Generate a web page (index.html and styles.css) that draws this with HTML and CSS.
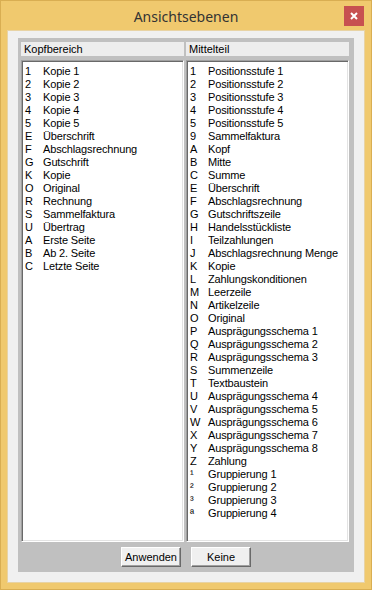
FILE: index.html
```html
<!DOCTYPE html>
<html>
<head>
	<title>Ansichtsebenen</title>
	<link rel="stylesheet" href="styles.css">
</head>
<body>
<div class="window">
	<div class="titlebar">
		<div class="title">Ansichtsebenen</div>
		<div class="close">
			<svg width="8" height="8" viewBox="0 0 8 8"><path d="M1 1L7 7M7 1L1 7" stroke="#fff" stroke-width="2"/></svg>
		</div>
	</div>
	<div class="client">
		<div class="panel">
			<div class="columns">
				<div class="column">
					<div class="header">Kopfbereich</div>
					<div class="list">
						<div class="item"><span>1</span><span>Kopie 1</span></div>
						<div class="item"><span>2</span><span>Kopie 2</span></div>
						<div class="item"><span>3</span><span>Kopie 3</span></div>
						<div class="item"><span>4</span><span>Kopie 4</span></div>
						<div class="item"><span>5</span><span>Kopie 5</span></div>
						<div class="item"><span>E</span><span>Überschrift</span></div>
						<div class="item"><span>F</span><span>Abschlagsrechnung</span></div>
						<div class="item"><span>G</span><span>Gutschrift</span></div>
						<div class="item"><span>K</span><span>Kopie</span></div>
						<div class="item"><span>O</span><span>Original</span></div>
						<div class="item"><span>R</span><span>Rechnung</span></div>
						<div class="item"><span>S</span><span>Sammelfaktura</span></div>
						<div class="item"><span>U</span><span>Übertrag</span></div>
						<div class="item"><span>A</span><span>Erste Seite</span></div>
						<div class="item"><span>B</span><span>Ab 2. Seite</span></div>
						<div class="item"><span>C</span><span>Letzte Seite</span></div>
					</div>
				</div>
				<div class="column">
					<div class="header">Mittelteil</div>
					<div class="list">
						<div class="item"><span>1</span><span>Positionsstufe 1</span></div>
						<div class="item"><span>2</span><span>Positionsstufe 2</span></div>
						<div class="item"><span>3</span><span>Positionsstufe 3</span></div>
						<div class="item"><span>4</span><span>Positionsstufe 4</span></div>
						<div class="item"><span>5</span><span>Positionsstufe 5</span></div>
						<div class="item"><span>9</span><span>Sammelfaktura</span></div>
						<div class="item"><span>A</span><span>Kopf</span></div>
						<div class="item"><span>B</span><span>Mitte</span></div>
						<div class="item"><span>C</span><span>Summe</span></div>
						<div class="item"><span>E</span><span>Überschrift</span></div>
						<div class="item"><span>F</span><span>Abschlagsrechnung</span></div>
						<div class="item"><span>G</span><span>Gutschriftszeile</span></div>
						<div class="item"><span>H</span><span>Handelsstückliste</span></div>
						<div class="item"><span>I</span><span>Teilzahlungen</span></div>
						<div class="item"><span>J</span><span>Abschlagsrechnung Menge</span></div>
						<div class="item"><span>K</span><span>Kopie</span></div>
						<div class="item"><span>L</span><span>Zahlungskonditionen</span></div>
						<div class="item"><span>M</span><span>Leerzeile</span></div>
						<div class="item"><span>N</span><span>Artikelzeile</span></div>
						<div class="item"><span>O</span><span>Original</span></div>
						<div class="item"><span>P</span><span>Ausprägungsschema 1</span></div>
						<div class="item"><span>Q</span><span>Ausprägungsschema 2</span></div>
						<div class="item"><span>R</span><span>Ausprägungsschema 3</span></div>
						<div class="item"><span>S</span><span>Summenzeile</span></div>
						<div class="item"><span>T</span><span>Textbaustein</span></div>
						<div class="item"><span>U</span><span>Ausprägungsschema 4</span></div>
						<div class="item"><span>V</span><span>Ausprägungsschema 5</span></div>
						<div class="item"><span>W</span><span>Ausprägungsschema 6</span></div>
						<div class="item"><span>X</span><span>Ausprägungsschema 7</span></div>
						<div class="item"><span>Y</span><span>Ausprägungsschema 8</span></div>
						<div class="item"><span>Z</span><span>Zahlung</span></div>
						<div class="item"><span>¹</span><span>Gruppierung 1</span></div>
						<div class="item"><span>²</span><span>Gruppierung 2</span></div>
						<div class="item"><span>³</span><span>Gruppierung 3</span></div>
						<div class="item"><span>ª</span><span>Gruppierung 4</span></div>
					</div>
				</div>
			</div>
			<div class="buttons">
				<div class="button">Anwenden</div>
				<div class="button">Keine</div>
			</div>
		</div>
	</div>
</div>
</body>
</html>
```

FILE: styles.css
```css
html, body {
	margin: 0;
	padding: 0;
}

body {
	width: 372px;
	height: 590px;
	font-family: "Liberation Sans", Arial, sans-serif;
	font-size: 11px;
	color: #000;
}

.window {
	box-sizing: border-box;
	width: 372px;
	height: 590px;
	background: #f0c96e;
	border: 1px solid #d9ae52;
	padding: 0 6px 6px 6px;
	display: flex;
	flex-direction: column;
}

.titlebar {
	height: 29px;
	display: grid;
	align-items: center;
}

.title, .close {
	grid-area: 1 / 1;
}

.title {
	text-align: center;
	font-family: "Noto Sans", sans-serif;
	font-size: 14px;
	color: #333;
	padding-top: 1px;
}

.close {
	justify-self: end;
	width: 20px;
	height: 20px;
	margin-right: 1px;
	margin-top: 1px;
	background: #c75050;
	display: flex;
	align-items: center;
	justify-content: center;
}

.client {
	flex: 1;
	background: #f0f0f0;
	border: 1px solid #e8d3a4;
	padding: 7px 10px 10px 10px;
	display: flex;
	flex-direction: column;
}

.panel {
	flex: 1;
	background: #c0c0c0;
	padding: 4px 5px 5px 3px;
	display: flex;
	flex-direction: column;
}

.columns {
	flex: 1;
	display: grid;
	grid-template-columns: 163px 163px;
	gap: 2px;
}

.column {
	display: flex;
	flex-direction: column;
	gap: 4px;
}

.header {
	height: 14px;
	line-height: 14px;
	background: #ededed;
	padding-left: 3px;
}

.list {
	flex: 1;
	background: #fff;
	border: 1px solid;
	border-color: #a0a0a0 #fff #fff #a0a0a0;
	box-shadow: inset 1px 1px #696969, inset -1px -1px #e3e3e3;
	padding: 4px 3px 3px 3px;
}

.item {
	display: grid;
	grid-template-columns: 18px 1fr;
	height: 13px;
	line-height: 13px;
	white-space: nowrap;
	letter-spacing: -0.15px;
}

.buttons {
	display: flex;
	justify-content: center;
	gap: 10px;
	margin-top: 5px;
	padding-left: 2px;
}

.button {
	box-sizing: border-box;
	width: 60px;
	height: 20px;
	line-height: 18px;
	text-align: center;
	background: #f0f0f0;
	border: 1px solid;
	border-color: #fff #696969 #696969 #fff;
	box-shadow: inset -1px -1px #a0a0a0;
}
```
